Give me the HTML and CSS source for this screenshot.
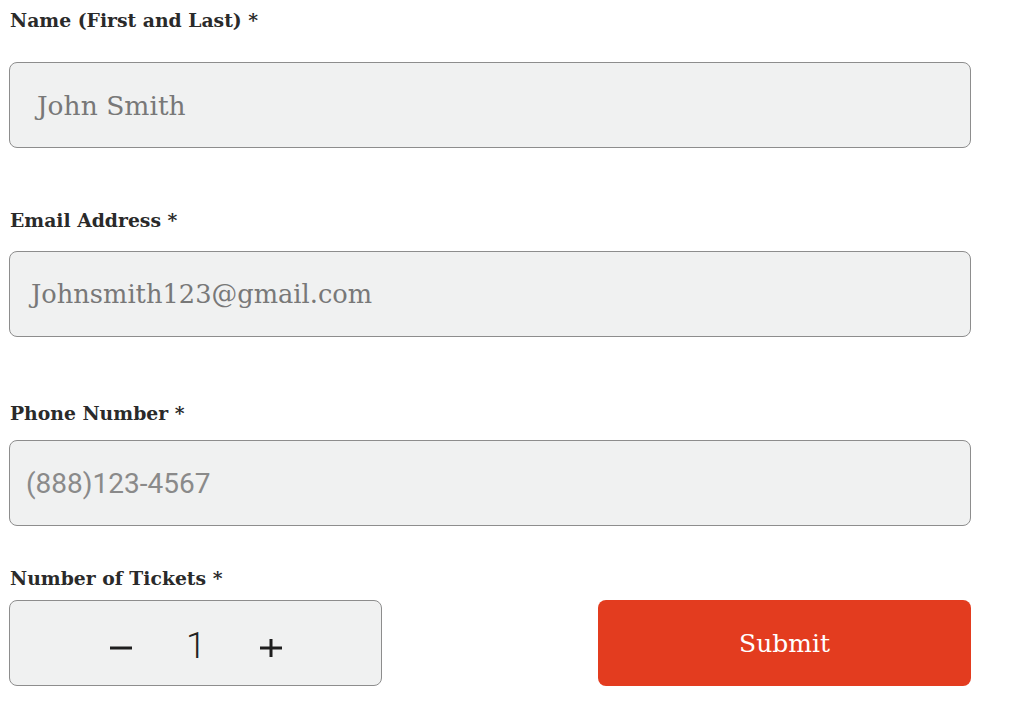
FILE: index.html
```html
<!DOCTYPE html>
<html>
<head>
<meta charset="utf-8">
<link rel="stylesheet" href="styles.css">
</head>
<body>
<form class="form">
  <div class="field f-name">
    <label class="label">Name (First and Last) *</label>
    <div class="box"><span class="ph ph-name">John Smith</span></div>
  </div>
  <div class="field f-email">
    <label class="label">Email Address *</label>
    <div class="box"><span class="ph ph-email">Johnsmith123@gmail.com</span></div>
  </div>
  <div class="field f-phone">
    <label class="label">Phone Number *</label>
    <div class="box"><span class="ph ph-phone">(888)123-4567</span></div>
  </div>
  <div class="row">
    <div class="field f-tickets">
      <label class="label">Number of Tickets *</label>
      <div class="box stepper">
        <svg class="minus" width="22" height="4" viewBox="0 0 22 4"><rect x="0" y="0.5" width="22" height="3" fill="#1e1e1e"/></svg>
        <span class="count">1</span>
        <svg class="plus" width="22" height="18" viewBox="0 0 22 18"><rect x="0" y="7.5" width="22" height="3" fill="#1e1e1e"/><rect x="9.5" y="0" width="3" height="18" fill="#1e1e1e"/></svg>
      </div>
    </div>
    <button type="button" class="submit">Submit</button>
  </div>
</form>
</body>
</html>
```
FILE: styles.css
```css
html, body { margin: 0; padding: 0; background: #fff; }
.form {
  width: 962px;
  padding: 10px 0 0 9px;
  display: flex;
  flex-direction: column;
  font-family: "DejaVu Serif", "Liberation Serif", serif;
}
.label {
  display: block;
  font-size: 18.8px;
  font-weight: bold;
  color: #2a2a2a;
  height: 20px;
  line-height: 20px;
  padding-left: 1px;
}
.box {
  box-sizing: border-box;
  height: 86px;
  border: 1.5px solid #8d8d8d;
  border-radius: 8px;
  background: #f0f1f1;
  display: flex;
  align-items: center;
}
.f-name .box { margin-top: 32px; }
.f-email { margin-top: 62px; }
.f-email .box { margin-top: 21px; }
.f-phone { margin-top: 66px; }
.f-phone .box { margin-top: 17px; }
.ph { color: #787878; font-size: 25.7px; }
.ph-name { padding-left: 27px; font-size: 26.5px; }
.ph-email { padding-left: 21px; }
.ph-phone { padding-left: 16px; font-family: Roboto, "Noto Sans", sans-serif; font-size: 28px; color: #8a8a8a; }
.row {
  margin-top: 42px;
  display: flex;
  justify-content: space-between;
  align-items: flex-end;
}
.f-tickets { width: 373px; }
.f-tickets .box { margin-top: 12px; }
.stepper {
  padding-left: 100px;
  font-family: Roboto, "Noto Sans", sans-serif;
  color: #222;
}
.minus { display: block; margin-top: 10px; }
.count { font-size: 36px; font-weight: 300; margin-left: 54px; line-height: 1; margin-top: 6px; }
.plus { display: block; margin-left: 54px; margin-top: 10px; }
.submit {
  width: 373px;
  height: 86px;
  border: 0;
  border-radius: 8px;
  background: #e33c1f;
  color: #fff;
  font-family: "DejaVu Serif", "Liberation Serif", serif;
  font-size: 25px;
  padding: 0;
}
```
